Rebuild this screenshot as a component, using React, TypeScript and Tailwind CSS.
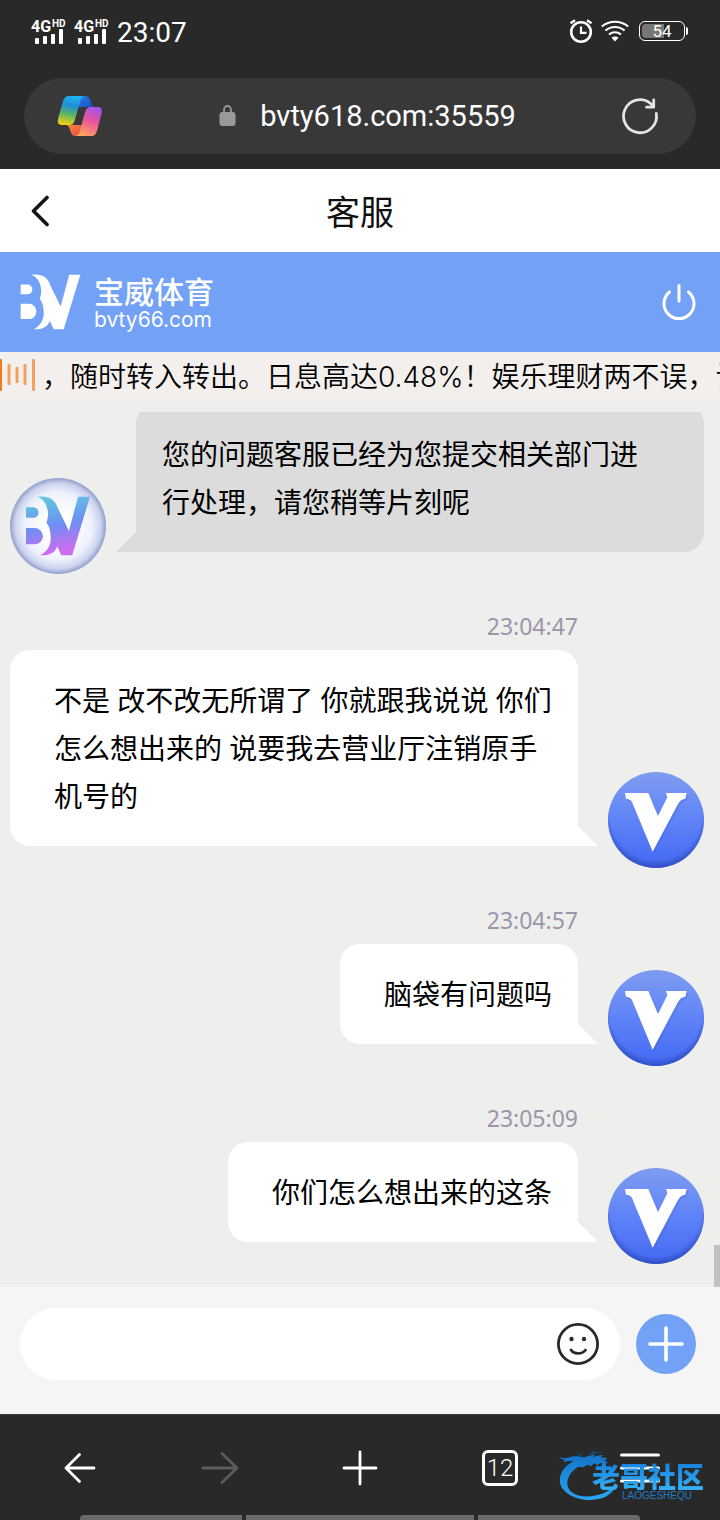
import type { ReactNode } from "react";

type ChatMessage = {
  id: number;
  from: "agent" | "me";
  time?: string;
  text: string;
};

const messages: ChatMessage[] = [
  {
    id: 1,
    from: "agent",
    text: "您的问题客服已经为您提交相关部门进行处理，请您稍等片刻呢",
  },
  {
    id: 2,
    from: "me",
    time: "23:04:47",
    text: "不是 改不改无所谓了 你就跟我说说 你们怎么想出来的 说要我去营业厅注销原手机号的",
  },
  { id: 3, from: "me", time: "23:04:57", text: "脑袋有问题吗" },
  { id: 4, from: "me", time: "23:05:09", text: "你们怎么想出来的这条" },
];

function Signal() {
  return (
    <svg width="37" height="28" viewBox="0 0 37 28" fill="#fff">
      <g className="font-['Roboto'] font-bold">
        <text x="0" y="15" fontSize="16">
          4G
        </text>
        <text x="21" y="10" fontSize="10">
          HD
        </text>
      </g>
      <rect x="4" y="21" width="4" height="6" rx="1" />
      <rect x="12" y="19" width="4" height="8" rx="1" />
      <rect x="20" y="17" width="4" height="10" rx="1" />
      <rect x="28" y="12" width="4" height="15" rx="1" />
    </svg>
  );
}

function StatusBar() {
  return (
    <div className="flex h-[66px] items-center justify-between pr-8 pl-[31px] text-white">
      <div className="flex items-center gap-1.5">
        <div className="mb-1 flex gap-1.5">
          <Signal />
          <Signal />
        </div>
        <span className="font-['Roboto',sans-serif] text-[28px] leading-8">
          23:07
        </span>
      </div>
      <div className="mb-1 flex items-center gap-2">
        <svg
          width="24"
          height="26"
          viewBox="0 0 24 26"
          fill="none"
          stroke="#fff"
          strokeWidth="2.6"
        >
          <circle cx="12" cy="14" r="9.8" />
          <path d="M12 8.5V14.8H17.5" strokeWidth="2.2" />
          <path d="M1.500 5.300L6 2.200M18 2.200L22.500 5.300" strokeWidth="2.4" />
        </svg>
        <svg
          width="28"
          height="22"
          viewBox="0 0 28 22"
          fill="none"
          stroke="#fff"
          strokeWidth="2"
        >
          <path d="M0.8 6.500C8.500 0 19.500 0 27.200 6.500" />
          <path d="M4.400 10.500C10 5.700 18 5.700 23.600 10.500" />
          <path d="M8 14.500C11.500 11.500 16.500 11.500 20 14.500" />
          <path
            d="M10.500 17.800C12.500 16 15.500 16 17.500 17.800L14 21.500Z"
            fill="#fff"
            stroke="none"
          />
        </svg>
        <div className="ml-0.5 flex items-center gap-px">
          <div className="relative flex h-5 w-[46px] items-center justify-center rounded-md border border-white">
            <div className="absolute inset-y-0.5 left-0.5 w-[22px] rounded-l bg-[#777]" />
            <span className="relative font-['Roboto',sans-serif] text-[17px] leading-none">
              54
            </span>
          </div>
          <div className="h-2 w-0.5 rounded-r bg-white" />
        </div>
      </div>
    </div>
  );
}

function CopilotIcon() {
  return (
    <svg width="46" height="42" viewBox="0 0 138 126">
      <defs>
        <linearGradient id="cpLeft" x1="0.6" y1="0" x2="0.4" y2="1">
          <stop offset="0" stopColor="#1fb2f2" />
          <stop offset="0.35" stopColor="#1f8fd8" />
          <stop offset="0.65" stopColor="#5ab562" />
          <stop offset="1" stopColor="#f0cf16" />
        </linearGradient>
        <linearGradient id="cpRight" x1="0.7" y1="0" x2="0.3" y2="1">
          <stop offset="0" stopColor="#a255ea" />
          <stop offset="0.45" stopColor="#e8559c" />
          <stop offset="1" stopColor="#ffa55c" />
        </linearGradient>
        <linearGradient id="cpTop" x1="0" y1="0" x2="1" y2="1">
          <stop offset="0" stopColor="#2a86e0" />
          <stop offset="1" stopColor="#1b44c4" />
        </linearGradient>
        <linearGradient id="cpBottom" x1="0" y1="0" x2="1" y2="1">
          <stop offset="0" stopColor="#f5893d" />
          <stop offset="1" stopColor="#e8483f" />
        </linearGradient>
      </defs>
      <path
        d="M70 3H84C97 3 99 13 103 24C105 31 108 35 114 36H62Z"
        fill="url(#cpTop)"
      />
      <path
        d="M28 90H76L62 123H54C44 123 42 112 38 102C36 95 33 91 28 90Z"
        fill="url(#cpBottom)"
      />
      <path
        d="M37 3H84C76 3 72 10 69 20L54 74C50 86 46 90 37 90H16C3 90 0 82 4 68L17 22C21 9 26 3 37 3Z"
        fill="url(#cpLeft)"
      />
      <path
        d="M103 123H54C63 123 66 116 69 106L84 52C88 40 93 36 102 36H121C134 36 137 44 133 58L121 104C117 117 113 123 103 123Z"
        fill="url(#cpRight)"
      />
    </svg>
  );
}

function AddressBar() {
  return (
    <div className="px-6 pt-3 pb-[15px]">
      <div className="flex h-[76px] items-center rounded-full bg-[#383838] pr-9 pl-[33px]">
        <button type="button" aria-label="Copilot">
          <CopilotIcon />
        </button>
        <div className="flex flex-1 items-center justify-center gap-6 pl-3">
          <svg width="17" height="22" viewBox="0 0 17 22">
            <rect x="0.5" y="7" width="16" height="14" rx="3" fill="#999" />
            <path
              d="M5 8V4.500a3.500 3.500 0 0 1 7 0V8"
              fill="none"
              stroke="#999"
              strokeWidth="1.8"
            />
          </svg>
          <span className="font-['Roboto',sans-serif] text-[29px] leading-9 text-white">
            bvty618.com:35559
          </span>
        </div>
        <button type="button" aria-label="刷新">
          <svg
            width="40"
            height="40"
            viewBox="0 0 40 40"
            fill="none"
            stroke="#e4e4e4"
            strokeWidth="2.8"
            strokeLinecap="round"
            strokeLinejoin="round"
          >
            <path d="M36.300 17.500A16.500 16.500 0 1 1 30.500 7.500L33.500 10.500" />
            <path d="M33.700 4V11.200H26.500" />
          </svg>
        </button>
      </div>
    </div>
  );
}

// Shared BV letter mark, used by the banner and the agent avatar
function BvMark({ fill, className }: { fill: string; className: string }) {
  return (
    <svg viewBox="64 344 180 165" className={className} fill={fill}>
      <path d="M66 375H86a14.500 14.500 0 0 1 0 29H66ZM66 432H90a22.500 22.500 0 0 1 0 45H66ZM98 346C126 342 146 352 153 376L184 440L209 346H242L193 507H163L152 482C146 500 130 509 104 507C124 498 134 480 134 460C134 442 131 428 122 417C132 392 126 358 98 346Z" />
    </svg>
  );
}

function Banner() {
  return (
    <div className="flex h-[100px] items-center justify-between bg-[#72a1f6] pr-[22px] pl-5 text-white">
      <div className="flex items-center gap-[13px]">
        <BvMark fill="#fff" className="h-14 w-[61px]" />
        <div className="flex flex-col">
          <span className="text-[30px] leading-9 font-medium">宝威体育</span>
          <span className="font-['Inter',sans-serif] text-[21px] leading-6">
            bvty66.com
          </span>
        </div>
      </div>
      <button type="button" aria-label="退出">
        <svg
          width="38"
          height="38"
          viewBox="0 0 38 38"
          fill="none"
          stroke="#fff"
          strokeWidth="3"
          strokeLinecap="round"
        >
          <path d="M19 2.500V18" />
          <path d="M9.500 9A15 15 0 1 0 28.500 9" />
        </svg>
      </button>
    </div>
  );
}

function Notice() {
  return (
    <div className="flex h-[50px] items-center overflow-hidden bg-[#f3efec]">
      <svg
        width="36"
        height="34"
        viewBox="0 0 36 34"
        className="mb-1 shrink-0"
        fill="#f2a15f"
      >
        <rect x="-1" y="1" width="3" height="32" rx="1" fill="#f47b1c" />
        <rect x="7.500" y="6" width="3" height="21" rx="1" />
        <rect x="15.500" y="9" width="3" height="16" rx="1" />
        <rect x="23.500" y="6" width="3" height="21" rx="1" />
        <rect x="32" y="1" width="3" height="32" rx="1" />
      </svg>
      <span className="pl-1.5 font-['Inter','Noto_Sans_CJK_SC',sans-serif] text-[28px] leading-[50px] font-[350] whitespace-nowrap text-black">
        ，随时转入转出。日息高达0.48%！娱乐理财两不误，让
      </span>
    </div>
  );
}

function AgentAvatar() {
  return (
    <div className="flex size-24 items-center justify-center rounded-full bg-[radial-gradient(circle,#ffffff_20%,#eef1fc_50%,#cbd3ee_63%,#8f9dcc_71%)]">
      <svg width="0" height="0" className="absolute">
        <linearGradient id="bvFill" x1="0" y1="0" x2="0.2" y2="1">
          <stop offset="0" stopColor="#62d0dc" />
          <stop offset="0.55" stopColor="#6d8ff2" />
          <stop offset="1" stopColor="#cf6cf0" />
        </linearGradient>
      </svg>
      <BvMark fill="url(#bvFill)" className="h-[60px] w-[66px]" />
    </div>
  );
}

function MyAvatar() {
  return (
    <svg width="96" height="96" viewBox="0 0 288 288">
      <defs>
        <linearGradient id="meBg" x1="0" y1="0" x2="0" y2="1">
          <stop offset="0" stopColor="#7f9cf0" />
          <stop offset="0.5" stopColor="#5f83f8" />
          <stop offset="1" stopColor="#4468f2" />
        </linearGradient>
        <radialGradient id="meEdge" cx="0.5" cy="0.44" r="0.56">
          <stop offset="0.85" stopColor="#2b48b8" stopOpacity="0" />
          <stop offset="1" stopColor="#2b48b8" stopOpacity="0.8" />
        </radialGradient>
      </defs>
      <circle cx="144" cy="144" r="144" fill="url(#meBg)" />
      <circle cx="144" cy="144" r="144" fill="url(#meEdge)" />
      <path
        d="M51 63H121L150 132L178 76L174 63H236L232 80C220 82 214 88 208 100L134 239L76 100C72 86 68 82 54 80Z"
        fill="#2f50c8"
        opacity="0.2"
        transform="translate(4 6)"
      />
      <path
        d="M51 63H121L150 132L178 76L174 63H236L232 80C220 82 214 88 208 100L134 239L76 100C72 86 68 82 54 80Z"
        fill="#fff"
      />
    </svg>
  );
}

function Message({ message }: { message: ChatMessage }) {
  const mine = message.from === "me";
  return (
    <li className={mine ? "flex flex-col items-end" : "flex flex-col"}>
      {message.time && (
        <time className="mr-[126px] mb-2 font-['Noto_Sans',sans-serif] text-[23px] leading-8 text-[#9b96ab]">
          {message.time}
        </time>
      )}
      <div
        className={
          mine
            ? "flex items-end gap-[30px]"
            : "flex flex-row-reverse items-end justify-end gap-[30px]"
        }
      >
        <div
          className={
            mine
              ? "relative mb-[22px] max-w-[568px] rounded-[20px] rounded-br-none bg-white py-[26px] pr-[26px] pl-11"
              : "relative mb-[22px] max-w-[568px] rounded-[20px] bg-[#dcdcdc] py-[26px] pr-11 pl-[26px] rounded-bl-none"
          }
        >
          <p className="font-['Noto_Sans','Noto_Sans_CJK_SC',sans-serif] text-[28px] leading-[48px] text-black">
            {message.text}
          </p>
          <span
            className={
              mine
                ? "absolute bottom-0 left-full size-5 bg-white [clip-path:polygon(0_0,100%_100%,0_100%)]"
                : "absolute right-full bottom-0 size-5 bg-[#dcdcdc] [clip-path:polygon(100%_0,100%_100%,0_100%)]"
            }
          />
        </div>
        <div className="shrink-0">{mine ? <MyAvatar /> : <AgentAvatar />}</div>
      </div>
    </li>
  );
}

function Composer() {
  return (
    <form
      className="flex items-center gap-4 bg-[#f5f5f5] pt-[21px] pr-6 pb-[34px] pl-5"
      onSubmit={(e) => e.preventDefault()}
    >
      <div className="flex h-[72px] flex-1 items-center rounded-full bg-white pr-5 pl-7">
        <input
          type="text"
          aria-label="输入消息"
          className="h-full min-w-0 flex-1 bg-transparent text-[28px] outline-none"
        />
        <button type="button" aria-label="表情">
          <svg
            width="44"
            height="44"
            viewBox="0 0 44 44"
            fill="none"
            stroke="#2a2a2c"
            strokeWidth="2.8"
            strokeLinecap="round"
          >
            <circle cx="22" cy="22" r="19.6" />
            <path d="M15 28C18 32.500 26 32.500 29.500 28" />
            <circle cx="15.500" cy="17" r="2.2" fill="#2a2a2c" stroke="none" />
            <circle cx="28" cy="17" r="2.2" fill="#2a2a2c" stroke="none" />
          </svg>
        </button>
      </div>
      <button
        type="button"
        aria-label="更多"
        className="flex size-[60px] items-center justify-center rounded-full bg-[#72a1f6]"
      >
        <svg
          width="36"
          height="36"
          viewBox="0 0 36 36"
          stroke="#fff"
          strokeWidth="3.6"
          strokeLinecap="round"
        >
          <path d="M18 2V34M2 18H34" />
        </svg>
      </button>
    </form>
  );
}

function NavButton({ label, children }: { label: string; children: ReactNode }) {
  return (
    <button
      type="button"
      aria-label={label}
      className="flex items-center justify-center"
    >
      {children}
    </button>
  );
}

function Watermark() {
  return (
    <div className="absolute right-4 bottom-[18px] flex items-start">
      <svg width="62" height="52" viewBox="0 0 186 156" className="-mr-7">
        <defs>
          <linearGradient id="dragon" x1="0" y1="0" x2="0" y2="1">
            <stop offset="0" stopColor="#1273c8" />
            <stop offset="1" stopColor="#27a5f5" />
          </linearGradient>
        </defs>
        <path
          d="M2 20C16 26 26 24 40 20C52 17 66 20 78 22L112 12L104 20L136 14L128 22L148 24L140 32L150 38L138 42L128 38L118 46L108 40L100 48L88 44L76 52L62 50C40 62 26 82 28 104C32 130 64 144 104 138C136 134 158 122 174 100C172 120 152 144 116 148C66 156 14 134 6 98C2 70 22 46 46 34C34 30 24 34 18 38L20 30C14 28 8 26 2 20Z"
          fill="url(#dragon)"
        />
        <path
          d="M66 18L54 8L74 14ZM88 16L104 4L140 8L110 10Z"
          fill="#174a73"
        />
      </svg>
      <div className="flex flex-col items-end gap-px pt-3">
        <span className="bg-linear-to-b from-[#1580dc] to-[#36b0f8] bg-clip-text text-[28px] leading-7 font-black text-transparent">
          老哥社区
        </span>
        <span className="pr-3 font-['Liberation_Sans',sans-serif] text-[10px] leading-[10px] text-[#1f7cc4]">
          LAOGESHEQU
        </span>
      </div>
    </div>
  );
}

function BrowserNav() {
  return (
    <footer className="relative border-t border-[#3a3a3a] bg-[#292929]">
      <nav className="grid h-[100px] grid-cols-5 px-2.5 pt-1.5">
        <NavButton label="后退">
          <svg
            width="32"
            height="32"
            viewBox="0 0 32 32"
            fill="none"
            stroke="#fff"
            strokeWidth="2.8"
            strokeLinecap="round"
            strokeLinejoin="round"
          >
            <path d="M30 16H2M15.500 2.500L2 16L15.500 29.500" />
          </svg>
        </NavButton>
        <NavButton label="前进">
          <svg
            width="38"
            height="34"
            viewBox="0 0 38 34"
            fill="none"
            stroke="#5c5c5c"
            strokeWidth="2.8"
            strokeLinecap="round"
            strokeLinejoin="round"
          >
            <path d="M2 17H36M21 2.500L36 17L21 31.500" />
          </svg>
        </NavButton>
        <NavButton label="新标签页">
          <svg
            width="36"
            height="36"
            viewBox="0 0 36 36"
            stroke="#fff"
            strokeWidth="2.8"
            strokeLinecap="round"
          >
            <path d="M18 2V34M2 18H34" />
          </svg>
        </NavButton>
        <NavButton label="标签页">
          <span className="flex size-9 items-center justify-center rounded-md border-3 border-white font-['Roboto',sans-serif] text-[24px] leading-none font-light text-white">
            12
          </span>
        </NavButton>
        <NavButton label="菜单">
          <svg
            width="40"
            height="30"
            viewBox="0 0 40 30"
            stroke="#fff"
            strokeWidth="3"
            strokeLinecap="round"
          >
            <path d="M1.500 2H38.500M1.500 15H38.500M1.500 28H38.500" />
          </svg>
        </NavButton>
      </nav>
      <div className="flex h-[5px] gap-1 px-20">
        <div className="flex-1 rounded-tl bg-[#6b6b6b]" />
        <div className="flex-[1.4] bg-[#6b6b6b]" />
        <div className="flex-1 rounded-tr bg-[#6b6b6b]" />
      </div>
      <Watermark />
    </footer>
  );
}

function App() {
  return (
    <div className="flex min-h-screen flex-col bg-[#eeeeec] font-['Noto_Sans_CJK_SC',sans-serif]">
      <div className="bg-[#292929]">
        <StatusBar />
        <AddressBar />
      </div>

      <header className="grid h-[83px] grid-cols-[80px_1fr_80px] items-center bg-white">
        <button type="button" aria-label="返回" className="pl-[30px]">
          <svg
            width="20"
            height="32"
            viewBox="0 0 20 32"
            fill="none"
            stroke="#161616"
            strokeWidth="3.6"
            strokeLinecap="round"
            strokeLinejoin="round"
          >
            <path d="M17 2.500L3.500 16L17 29.500" />
          </svg>
        </button>
        <h1 className="text-center text-[34px] leading-10 text-[#111]">客服</h1>
      </header>

      <Banner />
      <Notice />

      <main className="relative flex-1 pt-2.5">
        <div className="overflow-hidden">
          <ul className="-mt-2 flex flex-col gap-9 pr-4 pb-[23px] pl-2.5">
            {messages.map((message) => (
              <Message key={message.id} message={message} />
            ))}
          </ul>
        </div>
        <div className="absolute right-0 bottom-0 h-[42px] w-1.5 bg-[#c1c1c1]" />
      </main>

      <Composer />
      <BrowserNav />
    </div>
  );
}

export default App;
